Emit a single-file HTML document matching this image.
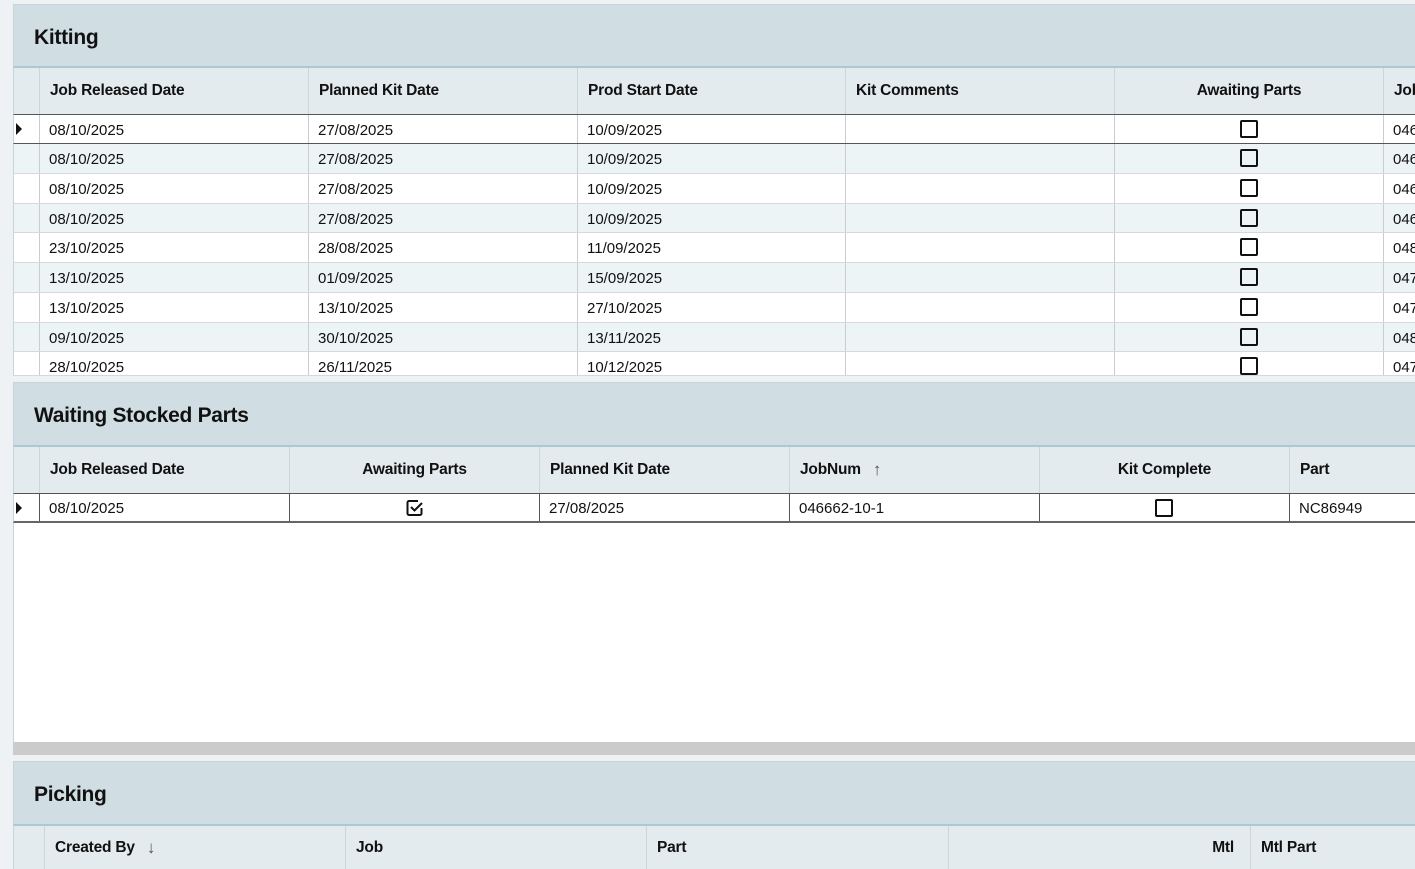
<!DOCTYPE html>
<html><head><meta charset="utf-8"><style>
*{box-sizing:border-box;margin:0;padding:0}
body{width:1415px;height:865px;overflow:hidden;background:#eef2f5;font-family:"Liberation Sans",sans-serif;color:#111;position:relative}
.abs{position:absolute}
.ph{position:absolute;left:13px;right:0;background:#d0dde3;border-top:1px solid #c8d4da;border-left:1px solid #c8d4da}
.ph span{position:absolute;left:20px;font-size:21px;font-weight:bold;letter-spacing:-0.3px}
.hr{position:absolute;left:13px;right:0;background:#e3ebee;border-top:2px solid #a9c9d3;border-left:1px solid #c8d4da}
.hc{position:absolute;top:0;bottom:0;border-left:1px solid #cdd5d9;font-size:15.5px;font-weight:bold;padding-left:10px;display:flex;align-items:center;letter-spacing:-0.2px}
.row{position:absolute;left:13px;right:0;height:30px;border-bottom:1px solid #d5d9db;border-left:1px solid #c8d4da}
.c{position:absolute;top:0;bottom:0;border-left:1px solid #c9cdd0;font-size:15px;padding-left:9px;padding-top:1px;display:flex;align-items:center}
.cb{position:absolute;width:18px;height:18px;border:2px solid #111;border-radius:2px}
.tri{position:absolute;left:2px;width:0;height:0;border-top:6px solid transparent;border-bottom:6px solid transparent;border-left:6px solid #111}
.ar{color:#555;margin-left:12px;font-weight:normal;font-size:17px}
</style></head><body>

<div class="ph" style="top:4px;height:63px"><span style="top:21px">Kitting</span></div>
<div class="hr" style="top:66px;height:48px">
 <div class="hc" style="left:25px;width:269px">Job Released Date</div>
 <div class="hc" style="left:294px;width:269px">Planned Kit Date</div>
 <div class="hc" style="left:563px;width:268px">Prod Start Date</div>
 <div class="hc" style="left:831px;width:269px">Kit Comments</div>
 <div class="hc" style="left:1100px;width:269px;justify-content:center;padding-left:0">Awaiting Parts</div>
 <div class="hc" style="left:1369px;width:60px">Job</div>
</div>
<div id="krows"></div>

<div class="abs" style="left:13px;right:0;top:376px;height:6px;background:#eef2f5"></div>
<div class="ph" style="top:382px;height:64px"><span style="top:21px">Waiting Stocked Parts</span></div>
<div class="hr" style="top:445px;height:48px">
 <div class="hc" style="left:25px;width:250px">Job Released Date</div>
 <div class="hc" style="left:275px;width:250px;justify-content:center;padding-left:0">Awaiting Parts</div>
 <div class="hc" style="left:525px;width:250px">Planned Kit Date</div>
 <div class="hc" style="left:775px;width:250px">JobNum <span class="ar">&#8593;</span></div>
 <div class="hc" style="left:1025px;width:250px;justify-content:center;padding-left:0">Kit Complete</div>
 <div class="hc" style="left:1275px;width:150px">Part</div>
</div>
<div class="abs" style="left:13px;right:0;top:493px;height:249px;background:#fff;border-left:1px solid #c8d4da"></div>
<div class="row" style="top:493px;height:30px;background:#fff;border-top:1px solid #555;border-bottom:2px solid #666">
 <div class="tri" style="top:8px"></div>
 <div class="c" style="left:25px;border-left-color:#555">08/10/2025</div>
 <div class="c" style="left:275px;width:250px;border-left-color:#555;padding:0;justify-content:center"><svg width="20" height="20" viewBox="0 0 20 20"><path d="M13 3H4a1.5 1.5 0 0 0-1.5 1.5v11A1.5 1.5 0 0 0 4 17h11a1.5 1.5 0 0 0 1.5-1.5V10" fill="none" stroke="#111" stroke-width="2"/><path d="M6 9l3.5 3.5L17 5" fill="none" stroke="#111" stroke-width="2"/></svg></div>
 <div class="c" style="left:525px;border-left-color:#555">27/08/2025</div>
 <div class="c" style="left:775px;border-left-color:#555">046662-10-1</div>
 <div class="c" style="left:1025px;width:250px;border-left-color:#555"><div class="cb" style="left:115px;top:5px"></div></div>
 <div class="c" style="left:1275px;border-left-color:#555">NC86949</div>
</div>
<div class="abs" style="left:13px;right:0;top:742px;height:13px;background:#cbcbcb"></div>

<div class="ph" style="top:761px;height:64px"><span style="top:21px">Picking</span></div>
<div class="hr" style="top:824px;height:45px">
 <div class="hc" style="left:30px;width:301px">Created By <span class="ar">&#8595;</span></div>
 <div class="hc" style="left:331px;width:301px">Job</div>
 <div class="hc" style="left:632px;width:302px">Part</div>
 <div class="hc" style="left:934px;width:302px;justify-content:flex-end;padding-right:16px">Mtl</div>
 <div class="hc" style="left:1236px;width:200px">Mtl Part</div>
</div>

<script>
var d=[["08/10/2025","27/08/2025","10/09/2025","046"],["08/10/2025","27/08/2025","10/09/2025","046"],["08/10/2025","27/08/2025","10/09/2025","046"],["08/10/2025","27/08/2025","10/09/2025","046"],["23/10/2025","28/08/2025","11/09/2025","048"],["13/10/2025","01/09/2025","15/09/2025","047"],["13/10/2025","13/10/2025","27/10/2025","047"],["09/10/2025","30/10/2025","13/11/2025","048"],["28/10/2025","26/11/2025","10/12/2025","047"]];
var tops=[114,144,174,204,233,263,293,323,352];
var h="";
d.forEach(function(r,i){
 var top=tops[i], bg=i%2?"#ecf4f6":"#fff", ht=i==8?(376-top):(tops[i+1]-top);
 var st=i==0?"border-top:1px solid #555;border-bottom:1px solid #555;":"";
 h+='<div class="row" style="top:'+top+'px;height:'+ht+'px;background:'+bg+';overflow:hidden;'+st+'">'+
 (i==0?'<div class="tri" style="top:8px"></div>':'')+
 '<div class="c" style="left:25px;height:29px">'+r[0]+'</div>'+
 '<div class="c" style="left:294px;height:29px">'+r[1]+'</div>'+
 '<div class="c" style="left:563px;height:29px">'+r[2]+'</div>'+
 '<div class="c" style="left:831px;height:29px"></div>'+
 '<div class="c" style="left:1100px;width:269px;height:29px"><div class="cb" style="left:125px;top:5px"></div></div>'+
 '<div class="c" style="left:1369px;height:29px">'+r[3]+'</div></div>';
});
document.getElementById("krows").innerHTML=h;
</script>
</body></html>
